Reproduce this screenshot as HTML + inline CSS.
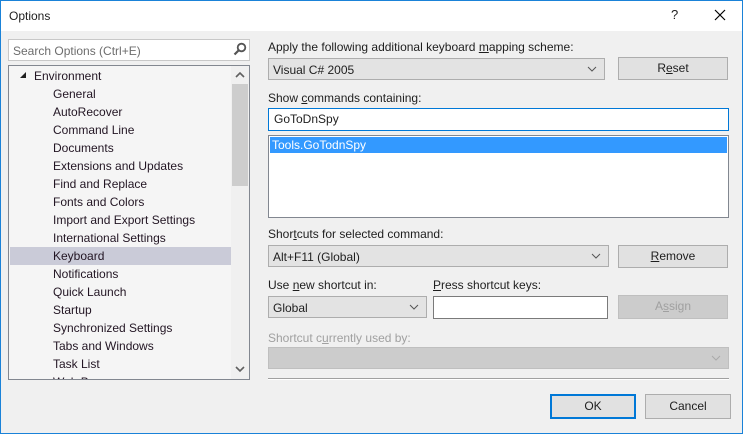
<!DOCTYPE html>
<html><head><meta charset="utf-8"><style>
*{margin:0;padding:0;box-sizing:border-box}
body{width:743px;height:434px;overflow:hidden;background:#f0f0f0;font-family:"Liberation Sans",sans-serif;font-size:12px;color:#1e1e1e;position:relative}
.a{position:absolute}
.win{left:0;top:0;width:743px;height:434px;border:1px solid #1a82d8}
.title{left:1px;top:1px;width:741px;height:30px;background:#fff}
.t{position:absolute;white-space:nowrap;line-height:14px}
.combo{position:absolute;background:#e3e3e3;border:1px solid #adadad;height:22px}
.combo span{position:absolute;left:4px;top:4px;white-space:nowrap}
.chev{position:absolute;right:7px;top:6px}
.btn{position:absolute;background:#e1e1e1;border:1px solid #adadad;text-align:center;line-height:21px}
.box{position:absolute;background:#fff;border:1px solid #7a7a7a}
u{text-decoration:underline}
.tree div{position:absolute;left:44px;white-space:nowrap;line-height:14px}
</style></head><body>
<div class="a win"></div>
<div class="a title"></div>
<div class="t" style="left:9px;top:9px;font-size:12px">Options</div>
<div class="t" style="left:671px;top:8px;font-size:13px">?</div>
<svg class="a" style="left:714px;top:9px" width="12" height="12"><path d="M1 1L11 11M11 1L1 11" stroke="#000" stroke-width="1.2"/></svg>

<div class="box" style="left:8px;top:39px;width:242px;height:22px;border-color:#c8c8c8"></div>
<div class="t" style="left:13px;top:44px;color:#6d6d6d">Search Options (Ctrl+E)</div>
<svg class="a" style="left:233px;top:42px" width="14" height="14"><circle cx="8.5" cy="5.5" r="3.8" fill="none" stroke="#555" stroke-width="1.8"/><path d="M6 8L1.5 12.5" stroke="#555" stroke-width="2.2"/></svg>

<div class="a" style="left:8px;top:65px;width:242px;height:315px;background:#f5f5f5;border:1px solid #828790"></div>
<div class="a" style="left:231px;top:66px;width:18px;height:313px;background:#f0f0f0"></div>
<div class="a" style="left:232px;top:84px;width:16px;height:102px;background:#cdcdcd"></div>
<svg class="a" style="left:234px;top:71px" width="12" height="8"><path d="M2 6L6 2L10 6" fill="none" stroke="#606060" stroke-width="1.6"/></svg>
<svg class="a" style="left:234px;top:365px" width="12" height="8"><path d="M2 2L6 6L10 2" fill="none" stroke="#606060" stroke-width="1.6"/></svg>
<div class="a" style="left:10px;top:247px;width:221px;height:18px;background:#cacbd8"></div>
<svg class="a" style="left:19px;top:71px" width="8" height="8"><path d="M7 1L7 7L1 7Z" fill="#1e1e1e"/></svg>
<div class="a tree" style="left:9px;top:0;width:222px;height:379px;overflow:hidden;color:#221523">
<div style="left:25px;top:69px">Environment</div>
<div style="top:87px">General</div>
<div style="top:105px">AutoRecover</div>
<div style="top:123px">Command Line</div>
<div style="top:141px">Documents</div>
<div style="top:159px">Extensions and Updates</div>
<div style="top:177px">Find and Replace</div>
<div style="top:195px">Fonts and Colors</div>
<div style="top:213px">Import and Export Settings</div>
<div style="top:231px">International Settings</div>
<div style="top:249px">Keyboard</div>
<div style="top:267px">Notifications</div>
<div style="top:285px">Quick Launch</div>
<div style="top:303px">Startup</div>
<div style="top:321px">Synchronized Settings</div>
<div style="top:339px">Tabs and Windows</div>
<div style="top:357px">Task List</div>
<div style="top:375px">Web Browser</div>
</div>

<div class="t" style="left:268px;top:40px">Apply the following additional keyboard <u>m</u>apping scheme:</div>
<div class="combo" style="left:268px;top:58px;width:337px"><span>Visual C# 2005</span><svg class="chev" width="10" height="8"><path d="M1 2L5 6L9 2" fill="none" stroke="#555"/></svg></div>
<div class="btn" style="left:618px;top:57px;width:110px;height:23px">R<u>e</u>set</div>
<div class="t" style="left:268px;top:91px">Show <u>c</u>ommands containing:</div>
<div class="box" style="left:268px;top:108px;width:461px;height:23px;border-color:#0078d7"></div>
<div class="t" style="left:274px;top:112px">GoToDnSpy</div>
<div class="box" style="left:268px;top:135px;width:461px;height:83px;border-color:#828790"></div>
<div class="a" style="left:270px;top:137px;width:457px;height:16px;background:#3399ff"></div>
<div class="t" style="left:272px;top:138px;color:#fff">Tools.GoTodnSpy</div>

<div class="t" style="left:268px;top:227px">Shor<u>t</u>cuts for selected command:</div>
<div class="combo" style="left:268px;top:245px;width:341px"><span>Alt+F11 (Global)</span><svg class="chev" width="10" height="8"><path d="M1 2L5 6L9 2" fill="none" stroke="#555"/></svg></div>
<div class="btn" style="left:618px;top:245px;width:110px;height:23px"><u>R</u>emove</div>
<div class="t" style="left:268px;top:278px">Use <u>n</u>ew shortcut in:</div>
<div class="t" style="left:433px;top:278px"><u>P</u>ress shortcut keys:</div>
<div class="combo" style="left:268px;top:296px;width:159px"><span>Global</span><svg class="chev" width="10" height="8"><path d="M1 2L5 6L9 2" fill="none" stroke="#555"/></svg></div>
<div class="box" style="left:433px;top:296px;width:175px;height:23px"></div>
<div class="btn" style="left:618px;top:295px;width:110px;height:24px;background:#cccccc;border-color:#bfbfbf;color:#a0a0a0">A<u>s</u>sign</div>
<div class="t" style="left:268px;top:331px;color:#a0a0a0">Shortcut c<u>u</u>rrently used by:</div>
<div class="combo" style="left:268px;top:347px;width:461px;background:#cccccc;border-color:#bfbfbf"><svg class="chev" width="10" height="8"><path d="M1 2L5 6L9 2" fill="none" stroke="#aaa"/></svg></div>
<div class="a" style="left:268px;top:378px;width:461px;height:1px;background:#a0a0a0"></div>
<div class="a" style="left:268px;top:379px;width:461px;height:1px;background:#fff"></div>

<div class="btn" style="left:550px;top:394px;width:86px;height:25px;border:2px solid #0078d7;line-height:21px">OK</div>
<div class="btn" style="left:645px;top:394px;width:86px;height:25px;line-height:23px">Cancel</div>
</body></html>
